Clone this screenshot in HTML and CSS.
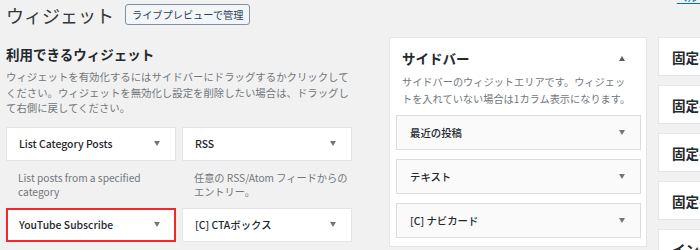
FILE: index.html
```html
<!DOCTYPE html>
<html lang="ja">
<head>
<meta charset="UTF-8">
<title>ウィジェット</title>
<link rel="stylesheet" href="styles.css">
</head>
<body>

<!-- Page header -->
<div class="page-header">
    <h1>ウィジェット</h1>
    <a class="title-action" href="#">ライブプレビューで管理</a>
    <a class="help-link" href="#">ヘルプ</a>
</div>

<div class="widgets-wrap">

    <!-- Available widgets -->
    <div class="available">
        <h2>利用できるウィジェット</h2>
        <p class="available-desc">ウィジェットを有効化するにはサイドバーにドラッグするかクリックしてください。ウィジェットを無効化し設定を削除したい場合は、ドラッグして右側に戻してください。</p>
        <div class="widget-list">
            <div class="widget-item">
                <div class="widget-top"><span>List Category Posts</span><span class="arrow-down"></span></div>
                <p class="widget-desc">List posts from a specified category</p>
            </div>
            <div class="widget-item">
                <div class="widget-top"><span>RSS</span><span class="arrow-down"></span></div>
                <p class="widget-desc">任意の RSS/Atom フィードからのエントリー。</p>
            </div>
            <div class="widget-item">
                <div class="widget-top highlight"><span>YouTube Subscribe</span><span class="arrow-down"></span></div>
                <p class="widget-desc">Display a YouTube subscribe button</p>
            </div>
            <div class="widget-item">
                <div class="widget-top"><span>[C] CTAボックス</span><span class="arrow-down"></span></div>
                <p class="widget-desc">CTAボックスを表示します。</p>
            </div>
        </div>
    </div>

    <!-- Sidebar area -->
    <div class="sidebar-panel">
        <div class="sidebar-head">
            <h3>サイドバー</h3>
            <span class="arrow-up"></span>
        </div>
        <p class="sidebar-desc">サイドバーのウィジットエリアです。ウィジェットを入れていない場合は1カラム表示になります。</p>
        <div class="sortables">
            <div class="sidebar-widget"><span>最近の投稿</span><span class="arrow-down"></span></div>
            <div class="sidebar-widget"><span>テキスト</span><span class="arrow-down"></span></div>
            <div class="sidebar-widget"><span>[C] ナビカード</span><span class="arrow-down"></span></div>
        </div>
    </div>

    <!-- Other widget areas (collapsed) -->
    <div class="area-column">
        <div class="area-box">固定ページ上部</div>
        <div class="area-box">固定ページ下部</div>
        <div class="area-box">固定ページ追従</div>
        <div class="area-box">固定ページ目次</div>
        <div class="area-box">インデックス上部</div>
    </div>

</div>

</body>
</html>
```

FILE: styles.css
```css
/* Basic page styling */
body {
    font-family: "Noto Sans CJK JP", "Noto Sans", sans-serif;
    background-color: #f1f1f1;
    color: #23282d;
    margin: 0;
    overflow: hidden;
}
p, h1, h2, h3 {
    margin: 0;
}

/* Header */
.page-header {
    display: flex;
    align-items: center;
    padding: 2px 0 0 6px;
    height: 25px;
}
.page-header h1 {
    font-size: 18px;
    font-weight: 400;
    line-height: 22px;
    color: #32373c;
}
.title-action {
    margin-left: 11px;
    padding: 0 6px;
    height: 19px;
    line-height: 19px;
    font-size: 10.2px;
    color: #2b3f5c;
    background-color: #f3f5f6;
    border: 1px solid #7e8fa6;
    border-radius: 3px;
    text-decoration: none;
}
.help-link {
    margin-left: auto;
    margin-right: -8px;
    align-self: flex-start;
    margin-top: -12px;
    font-size: 10.4px;
    color: #0073aa;
}

/* Main layout */
.widgets-wrap {
    display: flex;
    align-items: flex-start;
    padding-top: 10px;
    width: 700px;
    overflow: hidden;
}
.available {
    flex-shrink: 0;
    width: 346px;
    margin-left: 6px;
}
.available h2 {
    margin-top: 8px;
    font-size: 13.5px;
    line-height: 18px;
    font-weight: 700;
}
.available-desc {
    margin-top: 6px;
    font-size: 10.4px;
    line-height: 15.5px;
    color: #72777c;
}
.widget-list {
    display: grid;
    grid-template-columns: 170px 170px;
    column-gap: 6px;
    row-gap: 9px;
    margin-top: 11px;
}
.widget-top {
    box-sizing: border-box;
    height: 34px;
    display: flex;
    align-items: center;
    justify-content: space-between;
    padding: 0 15px 0 12px;
    background-color: #fff;
    border: 1px solid #e2e4e7;
    font-size: 10.4px;
    font-weight: 500;
}
.widget-top.highlight {
    border: 2px solid #f4262b;
    padding: 0 14px 0 11px;
}
.widget-desc {
    margin-top: 10px;
    padding: 0 0 0 12px;
    font-size: 10.2px;
    line-height: 14px;
    color: #72777c;
}

/* Small triangles */
.arrow-down {
    width: 0;
    height: 0;
    border-left: 3px solid transparent;
    border-right: 3px solid transparent;
    border-top: 5px solid #72777c;
}
.arrow-up {
    width: 0;
    height: 0;
    border-left: 3.5px solid transparent;
    border-right: 3.5px solid transparent;
    border-bottom: 5px solid #555d66;
}

/* Sidebar panel */
.sidebar-panel {
    flex-shrink: 0;
    box-sizing: border-box;
    width: 258px;
    margin-left: 37px;
    padding-bottom: 8px;
    background-color: #fff;
    border: 1px solid #e2e4e7;
}
.sidebar-head {
    display: flex;
    align-items: center;
    justify-content: space-between;
    padding: 11px 21px 0 12px;
}
.sidebar-head h3 {
    font-size: 13.5px;
    line-height: 18px;
    font-weight: 700;
}
.sidebar-desc {
    margin-top: 7px;
    padding: 0 13px 0 12px;
    font-size: 10.2px;
    line-height: 16.5px;
    color: #72777c;
    text-spacing-trim: space-all;
}
.sortables {
    display: flex;
    flex-direction: column;
    gap: 9px;
    margin-top: 8px;
    padding: 0 5px 0 6px;
}
.sidebar-widget {
    box-sizing: border-box;
    height: 35px;
    display: flex;
    align-items: center;
    justify-content: space-between;
    padding: 0 15px 0 13px;
    background-color: #fafafa;
    border: 1px solid #dcdcde;
    font-size: 10.4px;
    font-weight: 500;
}

/* Collapsed areas */
.area-column {
    display: flex;
    flex-direction: column;
    gap: 9px;
    margin-left: 11px;
    flex-shrink: 0;
}
.area-box {
    box-sizing: border-box;
    width: 200px;
    height: 39px;
    display: flex;
    align-items: center;
    padding-left: 13px;
    background-color: #fff;
    border: 1px solid #e2e4e7;
    font-size: 13.5px;
    font-weight: 700;
    white-space: nowrap;
}
```
